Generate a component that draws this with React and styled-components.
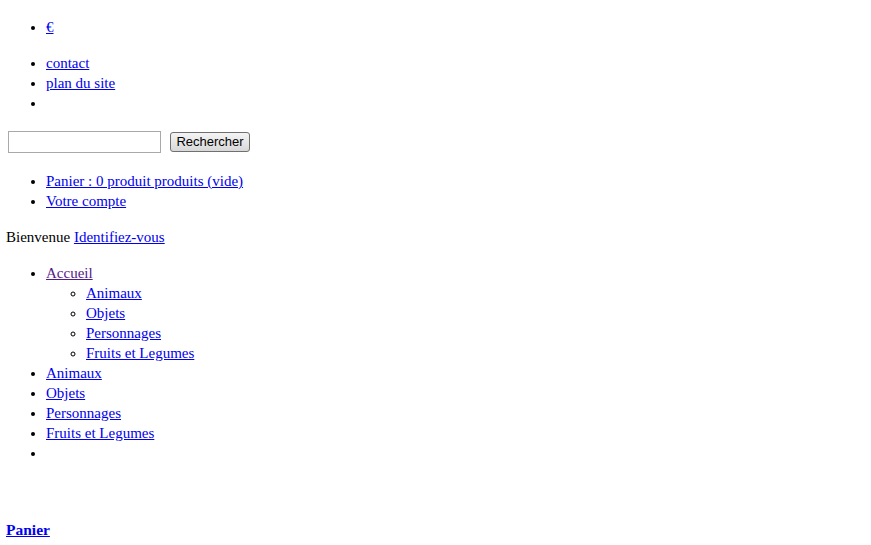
import React from "react"
import styled, { createGlobalStyle } from "styled-components"

const GlobalStyle = createGlobalStyle`
  body {
    margin: 0;
    font-family: "Liberation Serif", "Times New Roman", serif;
    font-size: 15px;
    line-height: 20px;
    color: #000;
    background: #fff;
  }
`

const Page = styled.div`
  padding: 1px 6px 6px;
`

const List = styled.ul`
  margin: ${(p) => (p.$nested ? "0" : "16px 0")};
  padding-left: 40px;
  list-style-type: ${(p) => (p.$nested ? "circle" : "disc")};
`

const Item = styled.li`
  min-height: 20px;
`

const Link = styled.a`
  color: ${(p) => (p.$visited ? "#551a8b" : "#0000ee")};
  text-decoration: underline;
  cursor: pointer;
`

const SearchForm = styled.form`
  display: flex;
  align-items: flex-start;
  gap: 9px;
  height: 26px;
  margin: 0;
  padding-left: 2px;
`

const SearchInput = styled.input`
  box-sizing: border-box;
  width: 153px;
  height: 22px;
  margin: 2px 0 0;
  padding: 1px 2px;
  border: 1px solid #a9a9a9;
  font-size: 13px;
  outline: none;
`

const SearchButton = styled.button`
  box-sizing: border-box;
  width: 80px;
  height: 20px;
  margin: 3px 0 0;
  padding: 0;
  border: 1px solid #707070;
  border-radius: 3px;
  background: linear-gradient(#f4f4f4, #e6e6e6 50%, #d8d8d8);
  font-family: "Liberation Sans", Arial, sans-serif;
  font-size: 13px;
  line-height: 16px;
  color: #000;
`

const Welcome = styled.div`
  line-height: 20px;
`

const Spacer = styled.div`
  height: 20px;
`

const CartTitle = styled.h4`
  margin: 21px 0;
  font-size: 15.5px;
  font-weight: bold;
  line-height: 20px;
`

const categories = ["Animaux", "Objets", "Personnages", "Fruits et Legumes"]

const App = () => (
  <Page>
    <GlobalStyle />
    <List>
      <Item>
        <Link href="#">€</Link>
      </Item>
    </List>
    <List>
      <Item>
        <Link href="#">contact</Link>
      </Item>
      <Item>
        <Link href="#">plan du site</Link>
      </Item>
      <Item />
    </List>
    <SearchForm onSubmit={(e) => e.preventDefault()}>
      <SearchInput type="text" />
      <SearchButton type="submit">Rechercher</SearchButton>
    </SearchForm>
    <List>
      <Item>
        <Link href="#">Panier : 0 produit produits (vide)</Link>
      </Item>
      <Item>
        <Link href="#">Votre compte</Link>
      </Item>
    </List>
    <Welcome>
      Bienvenue <Link href="#">Identifiez-vous</Link>
    </Welcome>
    <List>
      <Item>
        <Link href="#" $visited>
          Accueil
        </Link>
        <List $nested>
          {categories.map((c) => (
            <Item key={c}>
              <Link href="#">{c}</Link>
            </Item>
          ))}
        </List>
      </Item>
      {categories.map((c) => (
        <Item key={c}>
          <Link href="#">{c}</Link>
        </Item>
      ))}
      <Item />
    </List>
    <Spacer />
    <CartTitle>
      <Link href="#">Panier</Link>
    </CartTitle>
  </Page>
)

export default App
